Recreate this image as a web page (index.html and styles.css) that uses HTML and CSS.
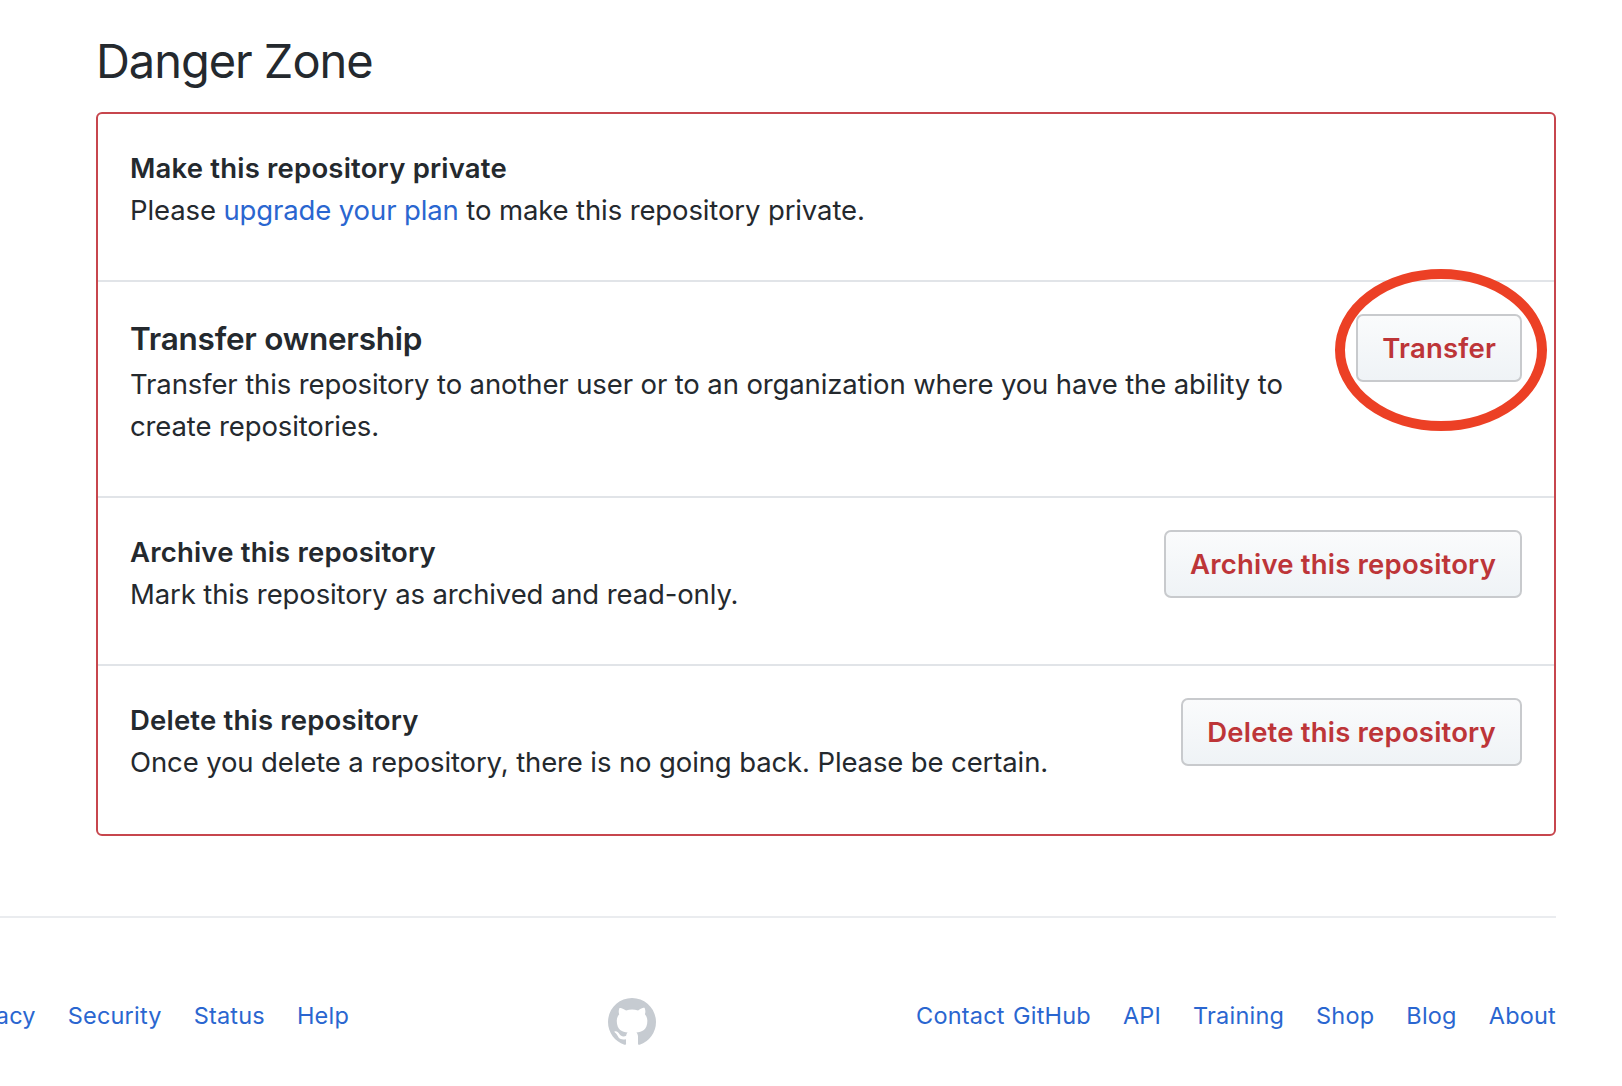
FILE: index.html
```html
<!DOCTYPE html>
<html lang="en">
<head>
<meta charset="utf-8">
<title>Danger Zone</title>
<link rel="stylesheet" href="styles.css">
</head>
<body>
<main class="settings">
  <h2 class="heading">Danger Zone</h2>
  <section class="danger-box">
    <div class="row">
      <div class="info">
        <h3 class="title">Make this repository private</h3>
        <p class="text">Please <a href="#">upgrade your plan</a> to make this repository private.</p>
      </div>
    </div>
    <div class="row row-transfer">
      <div class="info">
        <h3 class="title title-large">Transfer ownership</h3>
        <p class="text">Transfer this repository to another user or to an organization where you have the ability to<br>create repositories.</p>
      </div>
      <div class="highlighted">
        <button class="btn">Transfer</button>
        <svg class="ring" width="212" height="162" viewBox="0 0 212 162" aria-hidden="true"><ellipse cx="106" cy="81" rx="101" ry="76"/></svg>
      </div>
    </div>
    <div class="row">
      <div class="info">
        <h3 class="title">Archive this repository</h3>
        <p class="text">Mark this repository as archived and read-only.</p>
      </div>
      <button class="btn">Archive this repository</button>
    </div>
    <div class="row">
      <div class="info">
        <h3 class="title">Delete this repository</h3>
        <p class="text">Once you delete a repository, there is no going back. Please be certain.</p>
      </div>
      <button class="btn">Delete this repository</button>
    </div>
  </section>
</main>
<footer class="footer">
  <nav class="links links-left">
    <a href="#">Privacy</a><a href="#">Security</a><a href="#">Status</a><a href="#">Help</a>
  </nav>
  <svg class="mark" width="48" height="48" viewBox="0 0 16 16" aria-label="GitHub"><path fill-rule="evenodd" d="M8 0C3.58 0 0 3.58 0 8c0 3.54 2.29 6.53 5.47 7.59.4.07.55-.17.55-.38 0-.19-.01-.82-.01-1.49-2.01.37-2.53-.49-2.69-.94-.09-.23-.48-.94-.82-1.13-.28-.15-.68-.52-.01-.53.63-.01 1.08.58 1.23.82.72 1.21 1.87.87 2.33.66.07-.52.28-.87.51-1.07-1.78-.2-3.64-.89-3.64-3.95 0-.87.31-1.59.82-2.15-.08-.2-.36-1.02.08-2.12 0 0 .67-.21 2.2.82.64-.18 1.32-.27 2-.27.68 0 1.36.09 2 .27 1.53-1.04 2.2-.82 2.2-.82.44 1.1.16 1.92.08 2.12.51.56.82 1.27.82 2.15 0 3.07-1.87 3.75-3.65 3.95.29.25.54.73.54 1.48 0 1.07-.01 1.93-.01 2.2 0 .21.15.46.55.38A8.013 8.013 0 0 0 16 8c0-4.42-3.58-8-8-8z"/></svg>
  <nav class="links links-right">
    <a href="#">Contact GitHub</a><a href="#">API</a><a href="#">Training</a><a href="#">Shop</a><a href="#">Blog</a><a href="#">About</a>
  </nav>
</footer>
</body>
</html>
```
FILE: styles.css
```css
* {
  box-sizing: border-box;
}

body {
  margin: 0;
  min-height: 1086px;
  overflow: hidden;
  background: #fff;
  color: #24292e;
  font: 400 27.5px/42px Inter, "Liberation Sans", sans-serif;
}

h2, h3, p {
  margin: 0;
}

a {
  color: #2a66d0;
  text-decoration: none;
}

.settings {
  padding: 25px 66px 0 96px;
}

.heading {
  margin-bottom: 15px;
  font-size: 47px;
  font-weight: 400;
  line-height: 72px;
  letter-spacing: -1.05px;
}

.danger-box {
  border: 2px solid #c7464d;
  border-radius: 6px;
}

.row {
  display: flex;
  justify-content: space-between;
  align-items: flex-start;
  height: 168px;
  padding: 32px 32px 0;
  border-bottom: 2px solid #e1e4e8;
}

.row:last-child {
  border-bottom: 0;
}

.row-transfer {
  height: 216px;
}

.info {
  padding-top: 1px;
}

.title {
  font-size: 27.5px;
  font-weight: 600;
  letter-spacing: 0.19px;
}

.title-large {
  font-size: 31.5px;
  line-height: 48px;
  letter-spacing: -0.24px;
}

.text {
  letter-spacing: -0.12px;
  white-space: nowrap;
}

.btn {
  height: 68px;
  padding: 0 24px;
  border: 2px solid #c8cacd;
  border-radius: 7px;
  background: linear-gradient(#fafbfc, #eff3f6);
  color: #bd3538;
  font: inherit;
  font-weight: 600;
  line-height: 62px;
  letter-spacing: 0.19px;
  white-space: nowrap;
}

.highlighted {
  position: relative;
}

.ring {
  position: absolute;
  top: -45px;
  right: -25px;
  fill: none;
  stroke: #ec4025;
  stroke-width: 10;
  pointer-events: none;
}

.footer {
  display: flex;
  align-items: flex-start;
  margin: 80px 66px 0 0;
  padding-top: 80px;
  border-top: 2px solid #eaecef;
  font-size: 23.5px;
  line-height: 36px;
}

.links {
  display: flex;
  gap: 32px;
  letter-spacing: 0.2px;
  word-spacing: 1.5px;
}

.links-left {
  justify-content: flex-end;
  width: 349px;
}

.mark {
  margin-left: 259px;
  fill: #c6cbd1;
}

.links-right {
  margin-left: auto;
}
```
